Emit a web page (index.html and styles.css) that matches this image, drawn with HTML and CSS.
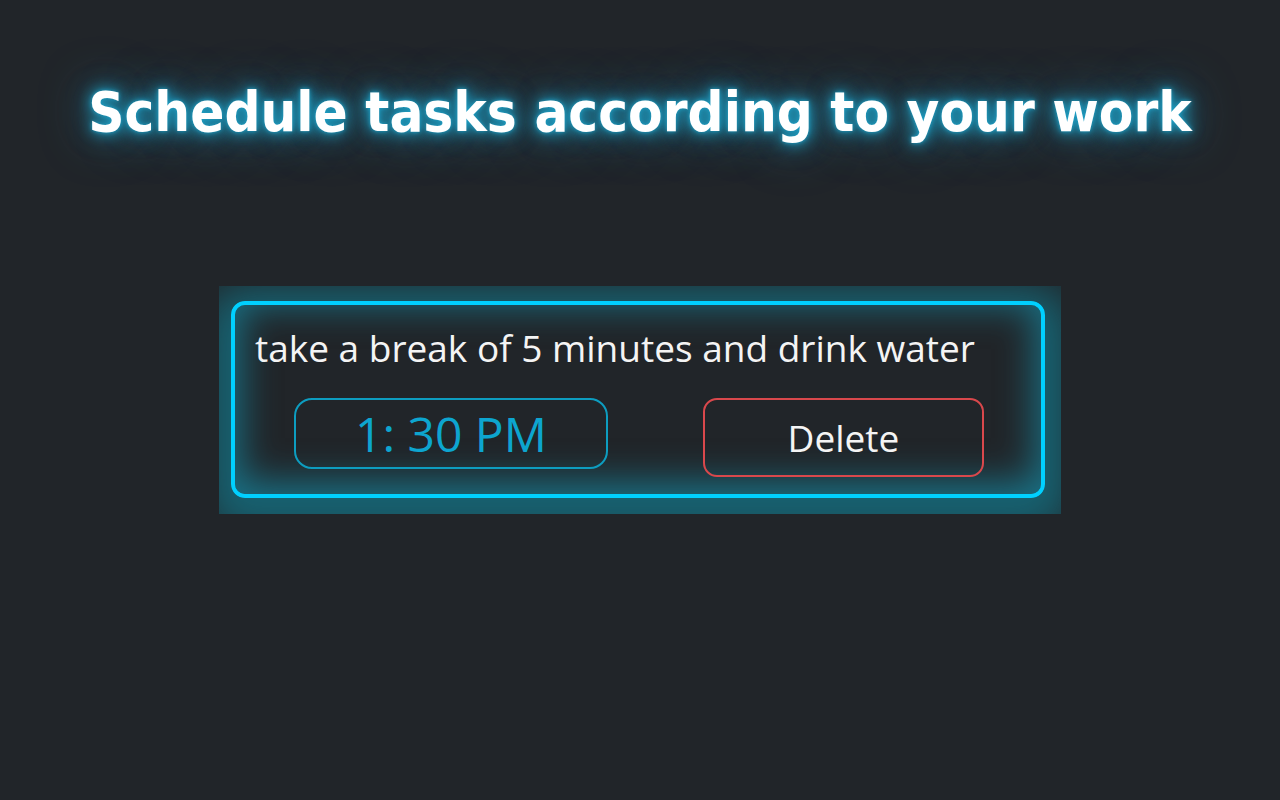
FILE: index.html
```
<!DOCTYPE html>
<html lang="en">
<head>
  <meta charset="UTF-8">
  <meta name="viewport" content="width=device-width, initial-scale=1.0">
  <title>Schedule tasks</title>
  <link rel="stylesheet" href="styles.css">
</head>
<body>
  <h1 class="heading">Schedule tasks according to your work</h1>
  <div class="preview">
    <div class="task">
      <p class="task-text">take a break of 5 minutes and drink water</p>
      <div class="task-row">
        <time class="time" datetime="13:30">1: 30 PM</time>
        <button class="delete" type="button">Delete</button>
      </div>
    </div>
  </div>
</body>
</html>
```
FILE: styles.css
```
* {
  box-sizing: border-box;
}
body {
  margin: 0;
  background-color: #212529;
  color: #fff;
  font-family: "Open Sans", "Noto Sans", sans-serif;
}
.heading {
  margin: 76px 0 138px;
  font-family: "DejaVu Sans Condensed", "DejaVu Sans", sans-serif;
  font-stretch: condensed;
  font-size: 56px;
  font-weight: bold;
  line-height: 72px;
  text-align: center;
  text-shadow: 0 0 4px #1fa3c9, 0 0 14px #1fa3c9, 0 0 24px #1f7f9f, 0 0 50px #2a7896;
}
.preview {
  width: 66%;
  max-width: 842px;
  margin: 0 auto;
  padding: 15px 16px 16px 12px;
  overflow: hidden;
}
.task {
  padding: 20px 20px 17px;
  border: 4px solid #00d0ff;
  border-radius: 14px;
  box-shadow: 0 12px 44px 28px rgba(20, 118, 136, 0.75), inset 0 -6px 36px 6px rgba(24, 132, 156, 0.8);
}
.task-text {
  margin: 0 0 27px;
  font-size: 37px;
  line-height: 46px;
  color: #f4f4f4;
}
.task-row {
  display: flex;
  align-items: flex-start;
  gap: 95px;
  padding: 0 37px 0 39px;
}
.time {
  flex: 19;
  border: 2px solid #0d9dc0;
  border-radius: 18px;
  font-size: 48px;
  line-height: 67px;
  color: #0da5cf;
  text-align: center;
}
.delete {
  flex: 17;
  height: 79px;
  padding: 0;
  border: 2px solid #d9484c;
  border-radius: 14px;
  background: none;
  font-family: inherit;
  font-size: 37px;
  color: #f4f4f4;
}
```
